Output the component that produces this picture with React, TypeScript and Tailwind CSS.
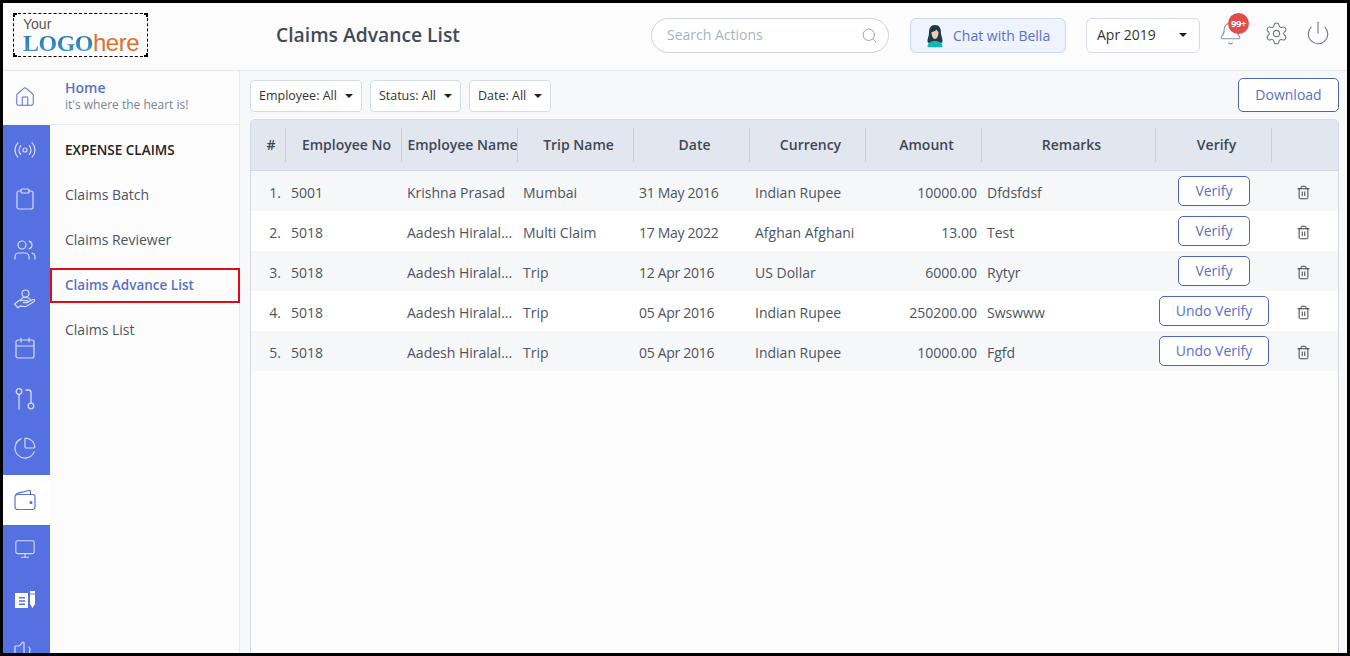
import React from 'react';
import { Bell, Calendar, ChartPie, Clipboard, House, Monitor, Power, Radio, Search, Settings, Trash2, Users, Volume1 } from 'lucide-react';

const Caret = () => <span className="ml-2 inline-block h-0 w-0 border-x-[4px] border-t-[4px] border-x-transparent border-t-[#222]" />;

const HandIcon = () => (
  <svg width="24" height="24" viewBox="0 0 24 24" fill="none" stroke="currentColor" strokeWidth="1.2" strokeLinejoin="round" strokeLinecap="round">
    <circle cx="12.5" cy="6.5" r="3.5" />
    <path d="M7.5 14c0-2.500 2-3.500 5-3.500s4.500 1 5 2.500" />
    <path d="M1.500 17l4.500-3.500c1.500-.8 3-.5 4.500.2h3.500c1.300 0 1.300 2-.2 2H10.500" />
    <path d="M13.800 15.500l6.200-3c1.500-.5 2.300 1 1 2l-7 4.500c-1.500.8-3 .8-4.500.3l-2-.5-2.500 2-3-3.300" />
  </svg>
);

const BranchIcon = () => (
  <svg width="22" height="24" viewBox="0 0 22 24" fill="none" stroke="currentColor" strokeWidth="1.3" strokeLinecap="round" strokeLinejoin="round">
    <circle cx="5" cy="4.500" r="2.800" />
    <path d="M5 7.500V22" />
    <circle cx="17" cy="19" r="2.800" />
    <path d="M17 16V5.500c0-1.500-.8-2.500-2.500-2.500H12" />
  </svg>
);

const NewsIcon = () => (
  <svg width="20" height="18" viewBox="0 0 20 18" fill="white">
    <path fillRule="evenodd" d="M0 2h13v15H0zM4 6h6v1.500H4zM4 9.250h6v1.500H4zM4 12.500h6V14H4z" />
    <path d="M15 0h5v2.500h-5zM15 3.500h5v9.500l-2.500 4-2.500-4z" />
  </svg>
);

const WalletIcon = () => (
  <svg width="24" height="24" viewBox="0 0 24 24" fill="none" stroke="currentColor" strokeWidth="1.2" strokeLinejoin="round">
    <rect x="2" y="6.500" width="20" height="15" rx="2.500" />
    <path d="M2.500 7.500C3 6 4 5.500 5 5.200L16 2.500c1-.2 1.500.3 1.500 1.200v2.800" />
    <circle cx="18" cy="14.500" r="1" fill="currentColor" />
  </svg>
);

const BellaAvatar = () => (
  <svg width="20" height="24" viewBox="0 0 20 24">
    <path d="M10 1C5.500 1 4 4.500 4 9c0 3-1.500 5-1.500 8 0 2 2 3 7.500 3s7.500-1 7.500-3c0-3-1.500-5-1.500-8 0-4.500-1.500-8-6-8z" fill="#1d3a4c" />
    <path d="M2.500 23c0-4 3-6 7.500-6s7.500 2 7.500 6c0 .5-15 .5-15 0z" fill="#14b8b0" />
    <path d="M6.500 8c2 0 4-1 5-2.500.5 1.200 1.200 2 2 2.500 0 4-1.500 7-3.500 7S6.500 12 6.500 8z" fill="#f4c7b0" />
  </svg>
);

const Logo = () => (
  <div className="relative ml-[10px] mt-[10px] h-[44px] w-[135px] border border-dashed border-black pl-[9px] pt-[3px] font-['Liberation_Sans',sans-serif]">
    <span className="absolute -left-px -top-px h-[4px] w-[4px] border-l-2 border-t-2 border-black" />
    <span className="absolute -right-px -top-px h-[4px] w-[4px] border-r-2 border-t-2 border-black" />
    <span className="absolute -bottom-px -left-px h-[4px] w-[4px] border-b-2 border-l-2 border-black" />
    <span className="absolute -bottom-px -right-px h-[4px] w-[4px] border-b-2 border-r-2 border-black" />
    <div className="h-[15px] text-[14px] leading-[15px] text-[#555]">Your</div>
    <div className="flex h-[22px] items-baseline text-[24px] leading-[22px]">
      <span className="bg-gradient-to-b from-[#2a6fa8] to-[#3f9ad0] bg-clip-text font-['Liberation_Serif',serif] font-bold tracking-[-0.5px] text-transparent">LOGO</span>
      <span className="font-light tracking-[-0.5px] text-[#e0702a]">here</span>
    </div>
  </div>
);

const railTop = [
  { icon: <Radio size={24} strokeWidth={1.2} />, cls: '' },
  { icon: <Clipboard size={24} strokeWidth={1.2} />, cls: 'pb-[2px]' },
  { icon: <Users size={24} strokeWidth={1.2} />, cls: '' },
  { icon: <HandIcon />, cls: 'pb-[2px]' },
  { icon: <Calendar size={24} strokeWidth={1.2} />, cls: 'pb-[4px]' },
  { icon: <BranchIcon />, cls: 'pb-[2px]' },
  { icon: <ChartPie size={24} strokeWidth={1.2} />, cls: 'pb-[4px]' },
];

const columns = ['#', 'Employee No', 'Employee Name', 'Trip Name', 'Date', 'Currency', 'Amount', 'Remarks', 'Verify', ''];

const rows = [
  { no: '1.', emp: '5001', name: 'Krishna Prasad', trip: 'Mumbai', date: '31 May 2016', cur: 'Indian Rupee', amt: '10000.00', rem: 'Dfdsfdsf', action: 'Verify' },
  { no: '2.', emp: '5018', name: 'Aadesh Hiralal...', trip: 'Multi Claim', date: '17 May 2022', cur: 'Afghan Afghani', amt: '13.00', rem: 'Test', action: 'Verify' },
  { no: '3.', emp: '5018', name: 'Aadesh Hiralal...', trip: 'Trip', date: '12 Apr 2016', cur: 'US Dollar', amt: '6000.00', rem: 'Rytyr', action: 'Verify' },
  { no: '4.', emp: '5018', name: 'Aadesh Hiralal...', trip: 'Trip', date: '05 Apr 2016', cur: 'Indian Rupee', amt: '250200.00', rem: 'Swswww', action: 'Undo Verify' },
  { no: '5.', emp: '5018', name: 'Aadesh Hiralal...', trip: 'Trip', date: '05 Apr 2016', cur: 'Indian Rupee', amt: '10000.00', rem: 'Fgfd', action: 'Undo Verify' },
];

const gridCols = 'grid grid-cols-[35px_116px_116px_116px_116px_116px_116px_174px_116px_66px]';

const FilterButton = ({ label }: { label: string }) => (
  <button className="flex h-8 items-center rounded-[4px] border border-[#d5dbe3] bg-white px-2 text-[12.500px] text-[#333]">
    {label}
    <Caret />
  </button>
);

export default function App() {
  return (
    <div className="flex h-[656px] w-[1350px] flex-col overflow-hidden border-[3px] border-black bg-[#fcfcfd] font-['Open_Sans',sans-serif]">
      <header className="flex h-[68px] shrink-0 items-start border-b border-[#e3e6ea] bg-[#fcfcfd]">
        <div className="w-[237px] shrink-0"><Logo /></div>
        <h1 className="ml-[36px] mt-[18px] w-[375px] shrink-0 whitespace-nowrap text-[19.300px] font-semibold leading-7 text-[#434a57]">Claims Advance List</h1>
        <div className="mt-[15px] flex h-[35px] w-[238px] shrink-0 items-center justify-between rounded-full border border-[#ccd2da] bg-white pl-[15px] pr-[10px]">
          <span className="mb-[2px] text-[14px] text-[#a9b2bf]">Search Actions</span>
          <Search size={17} strokeWidth={1.2} className="text-[#8b95a3]" />
        </div>
        <button className="ml-[21px] mt-[15px] flex h-[35px] w-[156px] shrink-0 items-center gap-[8px] rounded-[6px] border border-[#cdd7e6] bg-[#eef3fd] pl-[14px] text-[14px] text-[#5b70c6]">
          <BellaAvatar />
          Chat with Bella
        </button>
        <button className="ml-[20px] mt-[15px] flex h-[35px] w-[114px] shrink-0 items-center justify-between rounded-[6px] border border-[#d5dbe3] bg-white pb-[2px] pl-[10px] pr-[12px] text-[14px] text-[#333]">
          Apr 2019
          <Caret />
        </button>
        <div className="relative ml-[18px] mt-[18px] shrink-0 text-[#8a93a0]">
          <Bell size={25} strokeWidth={1} />
          <span className="absolute -right-[6px] -top-[8px] flex h-[21px] w-[21px] items-center justify-center rounded-full bg-[#e24c4c] text-[9.500px] font-bold leading-none tracking-[-0.5px] text-white">99+</span>
        </div>
        <Settings size={25} strokeWidth={1} className="ml-[21px] mt-[18px] shrink-0 text-[#6f7885]" />
        <Power size={26} strokeWidth={1} className="ml-[16px] mt-[17px] shrink-0 text-[#6f7885]" />
      </header>

      <div className="flex min-h-0 flex-1">
        <nav className="w-[47px] shrink-0 bg-[#fcfcfd]">
          <div className="flex h-[54px] items-center justify-center pb-[2px] pr-[3px] text-[#5570d8]">
            <House size={22} strokeWidth={1.1} />
          </div>
          <div className="bg-[#5570e0] text-[#d4dcf8]">
            {railTop.map((item, i) => (
              <div key={i} className={`flex h-[50px] items-center justify-center pr-[3px] ${item.cls}`}>{item.icon}</div>
            ))}
          </div>
          <div className="flex h-[50px] items-center justify-center bg-white pr-[3px] text-[#5570d8]">
            <WalletIcon />
          </div>
          <div className="h-[200px] bg-[#5570e0] text-[#d4dcf8]">
            <div className="flex h-[50px] items-center justify-center pb-[2px] pr-[3px]"><Monitor size={22} strokeWidth={1.2} /></div>
            <div className="flex h-[50px] items-center justify-center pr-[3px]"><NewsIcon /></div>
            <div className="flex h-[50px] items-center justify-center pr-[3px]"><Volume1 size={24} strokeWidth={1.2} /></div>
          </div>
        </nav>

        <aside className="w-[190px] shrink-0 border-r border-[#e6e9ed] bg-[#fcfcfd]">
          <div className="h-[54px] border-b border-[#e6e9ed] pl-[15px] pt-[8px]">
            <div className="text-[14px] font-semibold leading-[18px] text-[#5b70c6]">Home</div>
            <div className="text-[12px] leading-[16px] text-[#7b8490]">it's where the heart is!</div>
          </div>
          <div className="flex h-[50px] items-center pl-[15px] text-[13.500px] font-semibold text-[#222]">EXPENSE CLAIMS</div>
          <div className="-mt-px flex h-[40px] items-center pl-[15px] text-[14px] text-[#4d5461]">Claims Batch</div>
          <div className="mt-[5px] flex h-[40px] items-center pl-[15px] text-[14px] text-[#4d5461]">Claims Reviewer</div>
          <div className="-mr-px mt-[9px] flex h-[35px] items-center border-2 border-[#e00b14] pl-[13px] text-[13.500px] font-semibold text-[#5b70c6]">Claims Advance List</div>
          <div className="mt-[6px] flex h-[40px] items-center pl-[15px] text-[14px] text-[#4d5461]">Claims List</div>
        </aside>

        <main className="min-w-0 flex-1 bg-[#f7f8f9] pl-[10px] pr-2">
          <div className="flex h-[48px] items-start justify-between pt-[7px]">
            <div className="mt-[2px] flex gap-2">
              <FilterButton label="Employee: All" />
              <FilterButton label="Status: All" />
              <FilterButton label="Date: All" />
            </div>
            <button className="h-[34px] w-[101px] rounded-[5px] border border-[#4d66b8] bg-white pb-[2px] text-[14px] text-[#5b70c6]">Download</button>
          </div>
          <div className="h-[600px] w-[1089px] rounded-t-[5px] border border-[#d5dae2] bg-[#fcfcfd]">
            <div className={`${gridCols} h-[51px] items-center border-b border-[#d2d8e0] bg-[#e2e7ef] text-[14px] font-semibold text-[#3f4754]`}>
              {columns.map((c, i) => (
                <div key={i} className={`flex h-[34px] items-center justify-center whitespace-nowrap pb-[2px] pl-[6px] ${i === 9 ? '' : 'border-r border-[#ccd2db]'}`}>{c}</div>
              ))}
            </div>
            {rows.map((r, i) => (
              <div key={i} className={`${gridCols} h-[40px] items-center text-[14px] text-[#4d5461] ${i % 2 === 0 ? 'bg-[#f6f7f8]' : 'bg-white'}`}>
                <div className="pr-[5px] pt-[3px] text-right">{r.no}</div>
                <div className="pl-[5px] pt-[3px]">{r.emp}</div>
                <div className="pl-[5px] pt-[3px] whitespace-nowrap">{r.name}</div>
                <div className="pl-[5px] pt-[3px] whitespace-nowrap">{r.trip}</div>
                <div className="pl-[5px] pt-[3px] whitespace-nowrap tracking-[-0.3px]">{r.date}</div>
                <div className="pl-[5px] pt-[3px] whitespace-nowrap">{r.cur}</div>
                <div className="pr-[5px] pt-[3px] text-right">{r.amt}</div>
                <div className="pl-[5px] pt-[3px]">{r.rem}</div>
                <div className="flex justify-center">
                  <button className={`h-[30px] rounded-[5px] border border-[#4d66b8] bg-white pb-[2px] text-[14px] text-[#5b70c6] ${r.action === 'Verify' ? 'w-[72px]' : 'w-[110px]'}`}>{r.action}</button>
                </div>
                <div className="flex justify-center pr-[3px] pt-[3px] text-[#333]"><Trash2 size={15} strokeWidth={1.5} /></div>
              </div>
            ))}
          </div>
        </main>
      </div>
    </div>
  );
}
